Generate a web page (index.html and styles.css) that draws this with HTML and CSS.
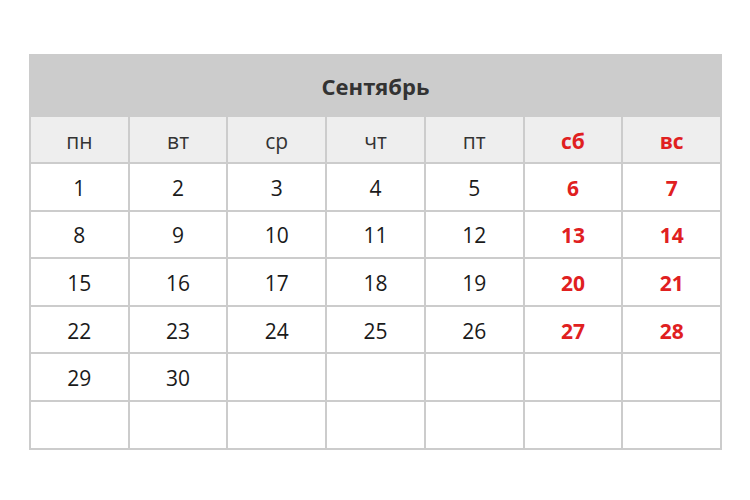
FILE: index.html
```html
<!DOCTYPE html>
<html lang="ru">
<head>
<meta charset="utf-8">
<link rel="stylesheet" href="styles.css">
</head>
<body>
<div class="cal">
  <div class="title">Сентябрь</div>
  <div class="grid">
    <div class="dn">пн</div><div class="dn">вт</div><div class="dn">ср</div><div class="dn">чт</div><div class="dn">пт</div><div class="dn we">сб</div><div class="dn we">вс</div>
    <div class="d">1</div><div class="d">2</div><div class="d">3</div><div class="d">4</div><div class="d">5</div><div class="d we">6</div><div class="d we">7</div>
    <div class="d">8</div><div class="d">9</div><div class="d">10</div><div class="d">11</div><div class="d">12</div><div class="d we">13</div><div class="d we">14</div>
    <div class="d">15</div><div class="d">16</div><div class="d">17</div><div class="d">18</div><div class="d">19</div><div class="d we">20</div><div class="d we">21</div>
    <div class="d">22</div><div class="d">23</div><div class="d">24</div><div class="d">25</div><div class="d">26</div><div class="d we">27</div><div class="d we">28</div>
    <div class="d">29</div><div class="d">30</div><div class="d"></div><div class="d"></div><div class="d"></div><div class="d"></div><div class="d"></div>
    <div class="d"></div><div class="d"></div><div class="d"></div><div class="d"></div><div class="d"></div><div class="d"></div><div class="d"></div>
  </div>
</div>
</body>
</html>
```
FILE: styles.css
```css
html, body {
  margin: 0;
  padding: 0;
  background: #ffffff;
}
body {
  font-family: "Open Sans", "Noto Sans", sans-serif;
}
.cal {
  width: 693px;
  margin: 54px 0 0 29px;
  background: #cccccc;
}
.title {
  height: 63px;
  display: flex;
  align-items: center;
  justify-content: center;
  font-size: 22px;
  font-weight: 700;
  color: #333333;
  padding-top: 1px;
  box-sizing: border-box;
}
.grid {
  display: grid;
  grid-template-columns: repeat(7, 1fr);
  grid-template-rows: 45px repeat(6, 45.6px);
  gap: 2px;
  padding: 0 2px 2px 2px;
}
.dn, .d {
  display: flex;
  align-items: center;
  justify-content: center;
  font-size: 21px;
  color: #1a1a1a;
  background: #ffffff;
  padding-top: 2px;
  box-sizing: border-box;
}
.dn {
  background: #eeeeee;
  color: #333333;
}
.we {
  color: #e0201f;
  font-weight: 700;
}
```
